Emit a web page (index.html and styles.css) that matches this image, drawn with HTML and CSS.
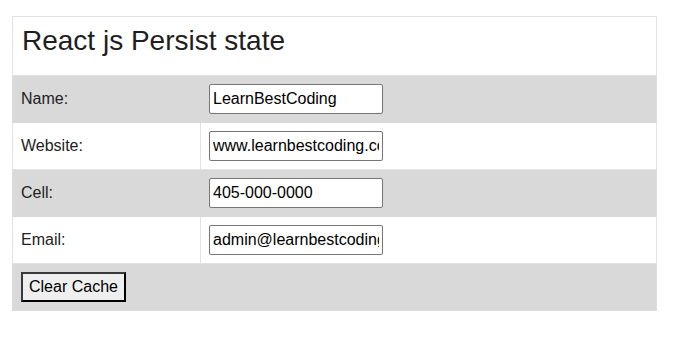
FILE: index.html
```html
<!DOCTYPE html>
<html>
<head>
<meta charset="utf-8">
<link rel="stylesheet" href="styles.css">
</head>
<body>
<table class="form-table">
  <tr class="head-row">
    <td colspan="2"><h1 class="title">React js Persist state</h1></td>
  </tr>
  <tr class="row-gray">
    <td class="label">Name:</td>
    <td class="field"><input class="text-input" type="text" value="LearnBestCoding"></td>
  </tr>
  <tr class="row-white">
    <td class="label">Website:</td>
    <td class="field"><input class="text-input" type="text" value="www.learnbestcoding.com"></td>
  </tr>
  <tr class="row-gray">
    <td class="label">Cell:</td>
    <td class="field"><input class="text-input" type="text" value="405-000-0000"></td>
  </tr>
  <tr class="row-white">
    <td class="label">Email:</td>
    <td class="field"><input class="text-input" type="text" value="admin@learnbestcoding.com"></td>
  </tr>
  <tr class="row-gray">
    <td colspan="2" class="actions"><button class="clear-btn" type="button">Clear Cache</button></td>
  </tr>
</table>
</body>
</html>
```
FILE: styles.css
```css
html, body {
  margin: 0;
  padding: 0;
  background: #ffffff;
}

body {
  padding: 16px 17px 0 12px;
  font-family: "Liberation Sans", Arial, sans-serif;
  color: #222;
}

.form-table {
  width: 645px;
  border-collapse: collapse;
  border: 1px solid #dddddd;
}

.form-table td {
  border: 1px solid #e2e2e2;
  padding: 8px;
  font-size: 16px;
  vertical-align: middle;
}

.head-row td {
  padding: 8px 8px 18px 9px;
  background: #ffffff;
}

.title {
  margin: 0;
  font-size: 28px;
  font-weight: normal;
  color: #1e1e1e;
  line-height: 32px;
}

.row-gray td {
  background: #d9d9d9;
  border-color: #d9d9d9;
}

.row-gray td:first-child {
  border-left-color: #dddddd;
}

.row-gray td:last-child {
  border-right-color: #dddddd;
}

.row-white td {
  background: #ffffff;
}

.label {
  width: 171px;
  color: #222;
}

.text-input {
  box-sizing: border-box;
  width: 174px;
  height: 30px;
  margin: 0;
  padding: 1px 3px;
  font-family: "Liberation Sans", Arial, sans-serif;
  font-size: 16px;
  color: #000;
  background: #fff;
  border: 1px solid #767676;
  border-radius: 2px;
  display: block;
}

.actions {
  padding-bottom: 9px;
}

.clear-btn {
  box-sizing: border-box;
  display: block;
  height: 30px;
  padding: 0 6px;
  font-family: "Liberation Sans", Arial, sans-serif;
  font-size: 16px;
  color: #000;
  background: #efefef;
  border: 2px outset #3a3a3a;
}
```
